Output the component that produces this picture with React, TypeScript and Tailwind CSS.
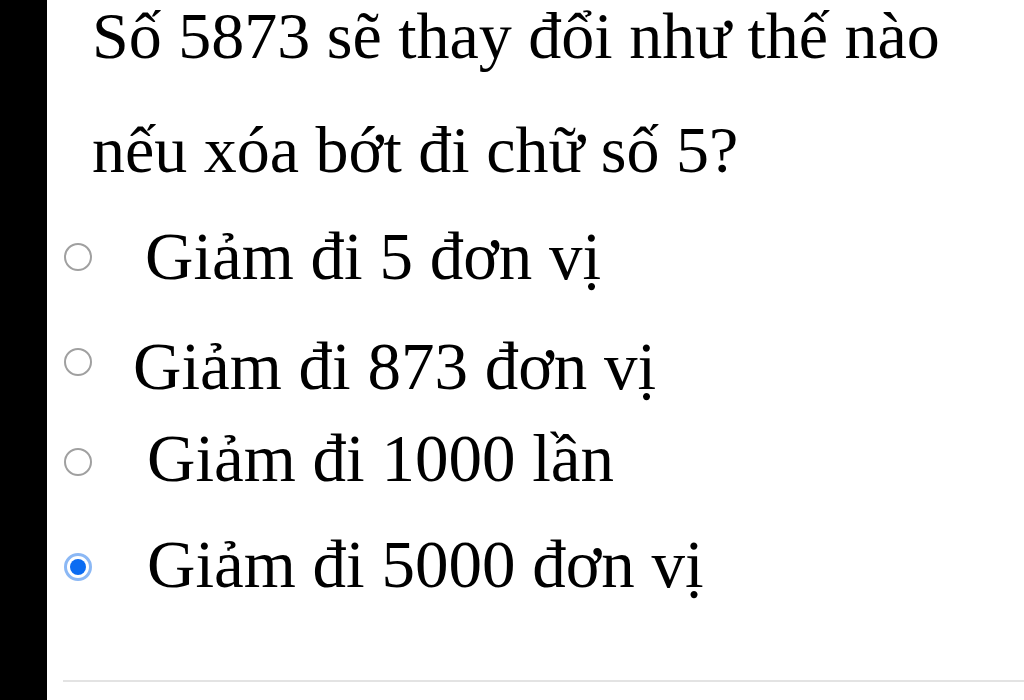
import React from "react";

const serif = { fontFamily: '"Liberation Serif", "Times New Roman", serif' };

function Radio({ checked }: { checked?: boolean }) {
  if (checked) {
    return (
      <div className="flex h-[28px] w-[28px] shrink-0 items-center justify-center rounded-full border-[3px] border-[#8bb8f5] bg-white">
        <div className="h-[16px] w-[16px] rounded-full bg-[#0b6cf2]" />
      </div>
    );
  }
  return <div className="h-[28px] w-[28px] shrink-0 rounded-full border-[2px] border-[#a0a0a0] bg-white" />;
}

export default function App() {
  const opts = [
    { text: "Giảm đi 5 đơn vị", h: "h-[110px]", rt: "mt-[13px]", ml: "ml-[53px]" },
    { text: "Giảm đi 873 đơn vị", h: "h-[92px]", rt: "mt-[8px]", ml: "ml-[41px]" },
    { text: "Giảm đi 1000 lần", h: "h-[106px]", rt: "mt-[16px]", ml: "ml-[55px]" },
    { text: "Giảm đi 5000 đơn vị", h: "h-[142px]", rt: "mt-[15px]", ml: "ml-[55px]", checked: true },
  ];
  return (
    <div className="flex h-[700px] w-[1024px] overflow-hidden bg-white text-black" style={serif}>
      <div className="h-full w-[47px] shrink-0 bg-black" />
      <div className="flex min-w-0 flex-1 flex-col">
        <p className="mt-[-21px] pl-[45px] text-[66px] leading-[114px]">
          Số 5873 sẽ thay đổi như thế nào
          <br />
          nếu xóa bớt đi chữ số 5?
        </p>
        <div className="mt-[23px] flex flex-col pl-[17px]">
          {opts.map((o) => (
            <div key={o.text} className={`flex items-start ${o.h}`}>
              <div className={o.rt}>
                <Radio checked={o.checked} />
              </div>
              <span className={`${o.ml} -mt-[7px] whitespace-nowrap text-[67px] leading-[66px]`}>{o.text}</span>
            </div>
          ))}
        </div>
        <div className="ml-[16px] h-[2px] bg-[#e3e3e3]" />
      </div>
    </div>
  );
}
